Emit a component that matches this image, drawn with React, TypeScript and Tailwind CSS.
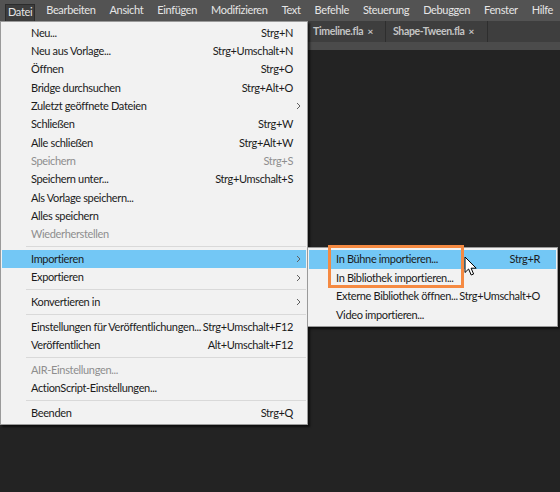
import React from "react";

type Item =
  | { sep: true }
  | { label: string; shortcut?: string; disabled?: boolean; sub?: boolean; active?: boolean; sep?: false };

const topMenus = ["Datei", "Bearbeiten", "Ansicht", "Einfügen", "Modifizieren", "Text", "Befehle", "Steuerung", "Debuggen", "Fenster", "Hilfe"];

const fileMenu: Item[] = [
  { label: "Neu...", shortcut: "Strg+N" },
  { label: "Neu aus Vorlage...", shortcut: "Strg+Umschalt+N" },
  { label: "Öffnen", shortcut: "Strg+O" },
  { label: "Bridge durchsuchen", shortcut: "Strg+Alt+O" },
  { label: "Zuletzt geöffnete Dateien", sub: true },
  { label: "Schließen", shortcut: "Strg+W" },
  { label: "Alle schließen", shortcut: "Strg+Alt+W" },
  { label: "Speichern", shortcut: "Strg+S", disabled: true },
  { label: "Speichern unter...", shortcut: "Strg+Umschalt+S" },
  { label: "Als Vorlage speichern..." },
  { label: "Alles speichern" },
  { label: "Wiederherstellen", disabled: true },
  { sep: true },
  { label: "Importieren", sub: true, active: true },
  { label: "Exportieren", sub: true },
  { sep: true },
  { label: "Konvertieren in", sub: true },
  { sep: true },
  { label: "Einstellungen für Veröffentlichungen...", shortcut: "Strg+Umschalt+F12" },
  { label: "Veröffentlichen", shortcut: "Alt+Umschalt+F12" },
  { sep: true },
  { label: "AIR-Einstellungen...", disabled: true },
  { label: "ActionScript-Einstellungen..." },
  { sep: true },
  { label: "Beenden", shortcut: "Strg+Q" },
];

const importMenu = [
  { label: "In Bühne importieren...", shortcut: "Strg+R", active: true },
  { label: "In Bibliothek importieren..." },
  { label: "Externe Bibliothek öffnen...", shortcut: "Strg+Umschalt+O" },
  { label: "Video importieren..." },
];

const font = { fontFamily: "Lato, 'Liberation Sans', sans-serif" };

function Chevron() {
  return (
    <svg width="5" height="8" viewBox="0 0 5 8" className="text-[#606060]">
      <path d="M1 1l3 3-3 3" fill="none" stroke="currentColor" strokeWidth="1" />
    </svg>
  );
}

function Cursor() {
  return (
    <svg width="13" height="20" viewBox="0 0 13 20">
      <path d="M1 1v15.5l3.6-3.5 2.6 6 2.4-1-2.5-5.8h5.1z" fill="#fff" stroke="#000" strokeWidth="1" strokeLinejoin="round" />
    </svg>
  );
}

export default function App() {
  return (
    <div className="relative w-[560px] h-[492px] overflow-hidden bg-[#232323] flex flex-col text-[11px] tracking-[-0.35px]" style={font}>
      {/* menubar */}
      <div className="h-[21px] bg-[#535353] flex items-center pl-[5px] text-[#e6e6e6] text-[11px] whitespace-nowrap">
        {topMenus.map((m, i) => (
          <div
            key={m}
            className={
              i === 0
                ? "h-[17px] mt-[3px] px-[2px] mr-[4px] flex items-center bg-[#3d3d3d] border border-[#2c2c2c] border-b-0"
                : "px-[7px] h-full flex items-center"
            }
          >
            {m}
          </div>
        ))}
      </div>

      {/* tabs */}
      <div className="h-[21px] bg-[#3e3e3e] flex items-stretch pl-[306px] text-[#c4c4c4] font-bold text-[10.5px] whitespace-nowrap">
        <div className="w-[80px] flex items-center justify-between pl-[7px] pr-[12px] border-r border-[#2e2e2e]">
          <span>Timeline.fla</span>
          <span className="text-[10px]">×</span>
        </div>
        <div className="w-[102px] flex items-center justify-between pl-[7px] pr-[13px] border-r border-[#2e2e2e]">
          <span>Shape-Tween.fla</span>
          <span className="text-[10px]">×</span>
        </div>
      </div>
      <div className="h-[8px] bg-[#4b4b4b]" />
      <div className="flex-1 bg-[#232323]" />

      {/* Datei menu */}
      <div className="absolute left-0 top-[21px] w-[308px] bg-[#f2f2f2] border border-[#9a9a9a] py-[2px] shadow-[2px_2px_2px_rgba(0,0,0,0.6)] text-[#1b1b1b]">
        {fileMenu.map((it, i) =>
          it.sep ? (
            <div key={i} className="h-[6.5px] flex items-center pl-[25px] pr-[1px]">
              <div className="h-px w-full bg-[#d9d9d9]" />
            </div>
          ) : (
            <div
              key={i}
              className={
                "h-[18.3px] mx-[1px] flex items-center pl-[29px] pr-[13px] " +
                (it.active ? "bg-[#73c7f5] " : "") +
                (it.disabled ? "text-[#8e8e8e]" : "")
              }
            >
              <span className="flex-1 whitespace-nowrap">{it.label}</span>
              {it.shortcut && <span className="whitespace-nowrap">{it.shortcut}</span>}
              {it.sub && (
                <span className="-mr-[8px]">
                  <Chevron />
                </span>
              )}
            </div>
          )
        )}
      </div>

      {/* Importieren submenu */}
      <div className="absolute left-[307px] top-[247px] w-[251px] bg-[#f2f2f2] border border-[#9a9a9a] py-[2px] shadow-[2px_2px_2px_rgba(0,0,0,0.6)] text-[#1b1b1b]">
        {importMenu.map((it) => (
          <div
            key={it.label}
            className={"h-[18.5px] mx-[1px] flex items-center pl-[27px] pr-[16px] " + (it.active ? "bg-[#73c7f5]" : "")}
          >
            <span className="flex-1 whitespace-nowrap">{it.label}</span>
            {it.shortcut && <span className="whitespace-nowrap">{it.shortcut}</span>}
          </div>
        ))}
      </div>

      {/* highlight box */}
      <div className="absolute left-[328px] top-[245px] w-[136px] h-[43px] border-[3px] border-[#f58a42]" />

      {/* cursor */}
      <div className="absolute left-[464px] top-[256px]">
        <Cursor />
      </div>
    </div>
  );
}
